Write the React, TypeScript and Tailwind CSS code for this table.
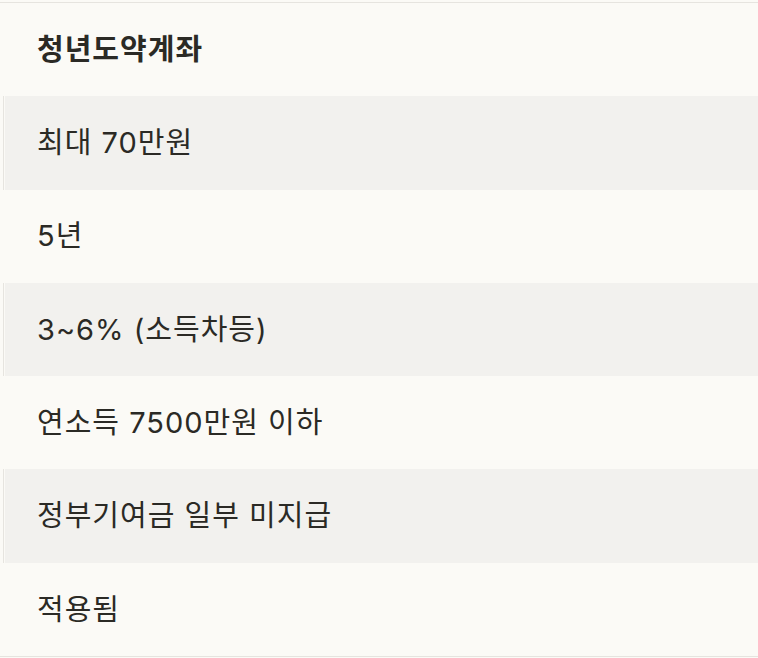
export default function App() {
  const rows = [
    "최대 70만원",
    "5년",
    "3~6% (소득차등)",
    "연소득 7500만원 이하",
    "정부기여금 일부 미지급",
    "적용됨",
  ];

  return (
    <div
      className="min-h-[658px] w-[758px] bg-[#fbfaf6] pt-[2px] text-[#2b2a25]"
      style={{ fontFamily: 'Inter, "Noto Sans CJK KR", sans-serif' }}
    >
      <div className="flex h-[655px] flex-col border-y border-[#e6e4df]">
        {/* Header */}
        <div className="flex flex-1 items-center pl-[37px] text-[29px] font-bold tracking-[1px]">
          청년도약계좌
        </div>

        {rows.map((text, i) =>
          i % 2 === 0 ? (
            <div key={text} className="flex flex-1">
              <div className="ml-[3px] w-[2px] border-l border-[#e6e4df]" />
              <div className="flex flex-1 items-center bg-[#f2f1ee] pl-[32px] text-[29px] tracking-[1px]">
                {text}
              </div>
            </div>
          ) : (
            <div key={text} className="flex flex-1 items-center pl-[37px] text-[29px] tracking-[1px]">
              {text}
            </div>
          )
        )}
      </div>
    </div>
  );
}
